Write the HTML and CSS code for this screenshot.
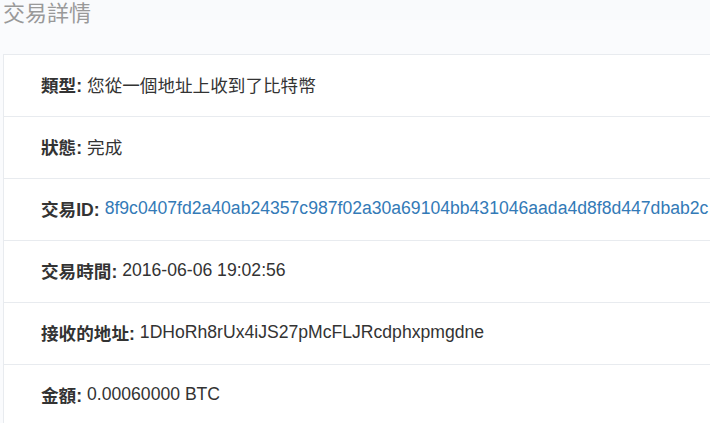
FILE: index.html
```html
<!DOCTYPE html>
<html lang="zh-Hant">
<head>
<meta charset="utf-8">
<title>交易詳情</title>
<link rel="stylesheet" href="styles.css">
</head>
<body>
<div class="page">
  <h1 class="title">交易詳情</h1>
  <div class="panel">
    <div class="row"><span class="label">類型:</span> <span class="value">您從一個地址上收到了比特幣</span></div>
    <div class="row"><span class="label">狀態:</span> <span class="value">完成</span></div>
    <div class="row"><span class="label">交易ID:</span> <a class="link" href="#">8f9c0407fd2a40ab24357c987f02a30a69104bb431046aada4d8f8d447dbab2c</a></div>
    <div class="row"><span class="label">交易時間:</span> <span class="value">2016-06-06 19:02:56</span></div>
    <div class="row"><span class="label">接收的地址:</span> <span class="value">1DHoRh8rUx4iJS27pMcFLJRcdphxpmgdne</span></div>
    <div class="row"><span class="label">金額:</span> <span class="value">0.00060000 BTC</span></div>
  </div>
</div>
</body>
</html>
```
FILE: styles.css
```css
html, body {
  margin: 0;
  padding: 0;
  background: #fafbfd;
  overflow: hidden;
}
.page {
  width: 740px;
  font-family: "Liberation Sans", "Noto Sans CJK TC", sans-serif;
  color: #333;
}
.title {
  margin: 0;
  padding: 0 0 0 3px;
  height: 54px;
  font-size: 22px;
  line-height: 28px;
  font-weight: normal;
  color: #999;
  font-family: "Liberation Sans", "Noto Sans CJK TC", sans-serif;
  background: linear-gradient(#f9fafc 0, #f9fafc 20px, #fafbfd 20px);
}
.panel {
  margin-left: 3px;
  background: #fff;
  border: 1px solid #e8ebef;
  border-right: none;
}
.row {
  height: 61px;
  box-sizing: border-box;
  display: flex;
  align-items: center;
  padding: 0 0 2px 37px;
  font-size: 17.6px;
  white-space: nowrap;
  border-top: 1px solid #e8ebef;
}
.row:first-child {
  height: 61px;
  border-top: none;
}
.row + .row {
  height: 62px;
}
.label {
  font-weight: bold;
  margin-right: 5px;
}
.link {
  color: #337ab7;
  text-decoration: none;
}
```
